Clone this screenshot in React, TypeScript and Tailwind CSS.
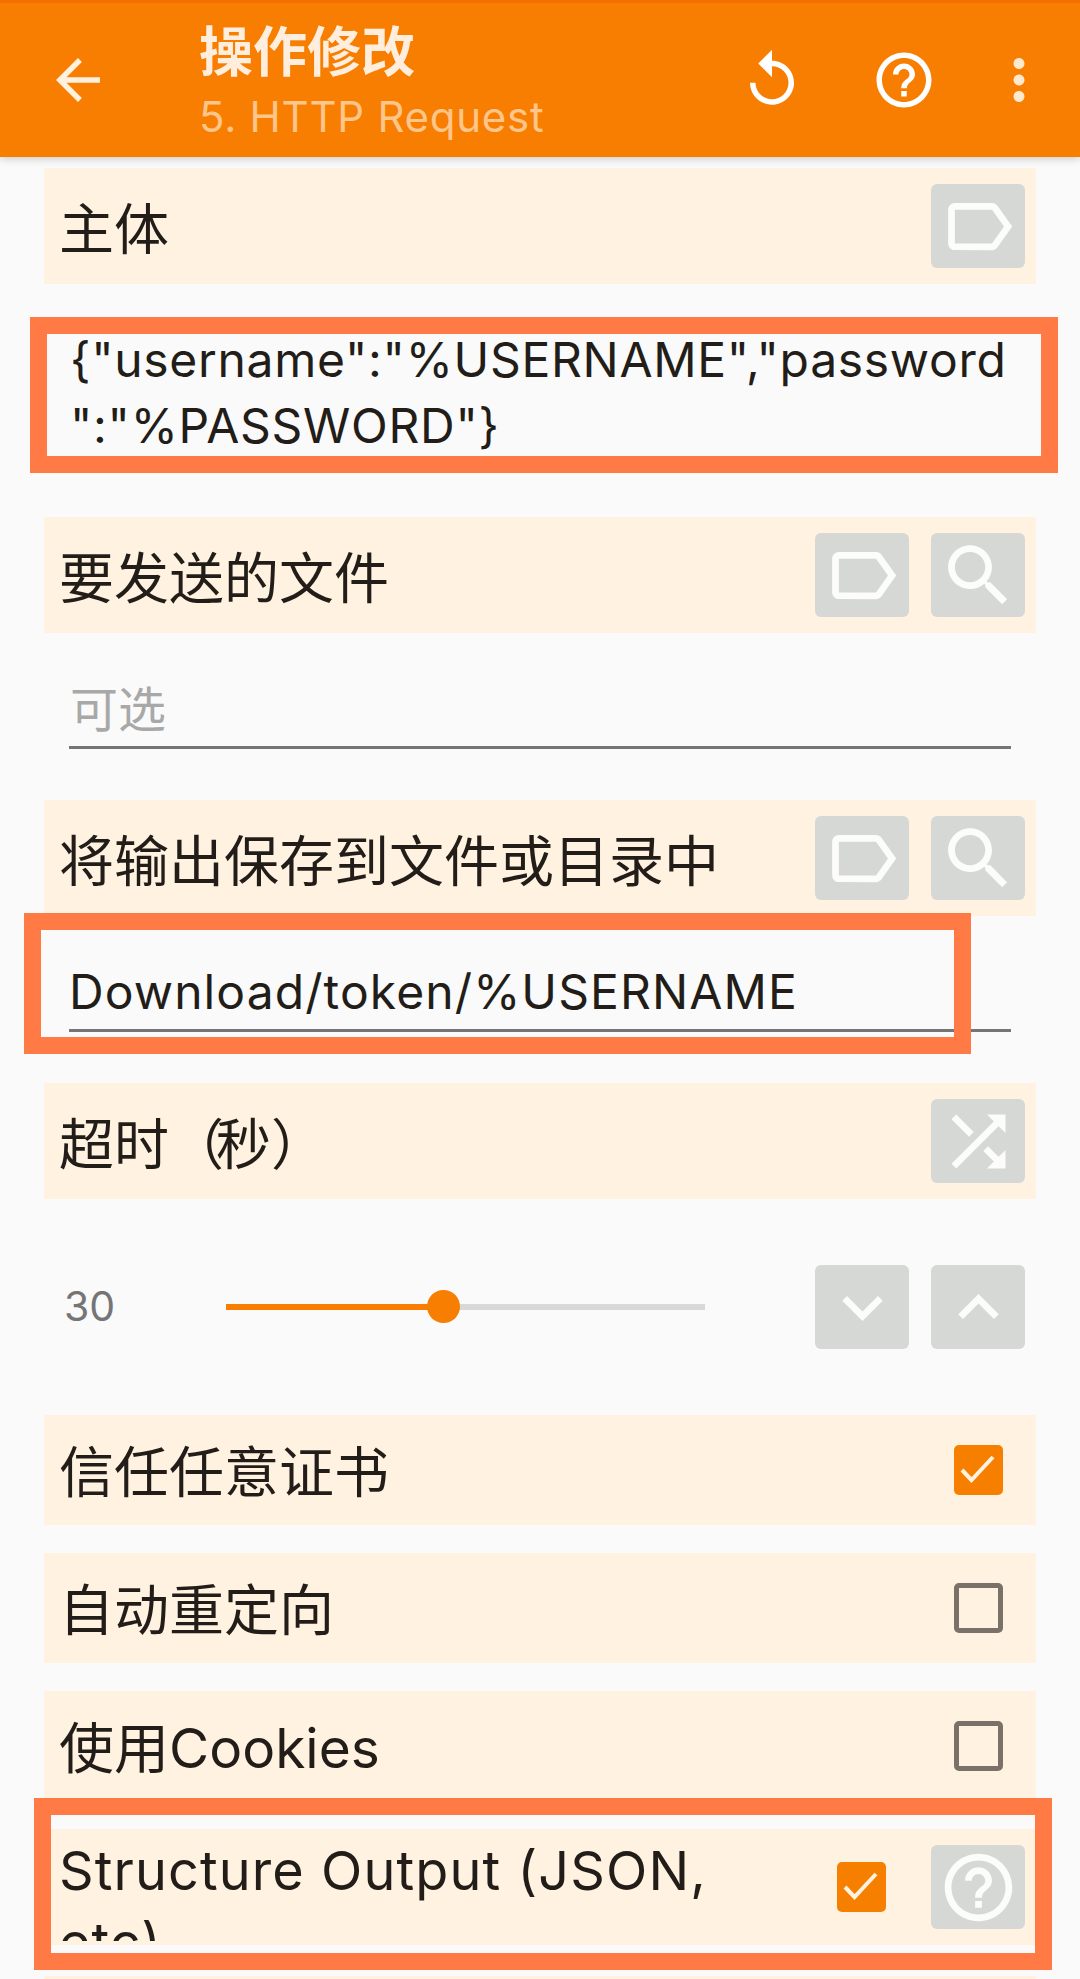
const ICONS = {
  label:
    "M17.63 5.84C17.27 5.33 16.67 5 16 5L5 5.01C3.9 5.01 3 5.9 3 7v10c0 1.1.9 1.99 2 1.99L16 19c.67 0 1.27-.33 1.63-.84L22 12l-4.37-6.16zM16 17H5V7h11l3.55 5L16 17z",
  search:
    "M15.5 14h-.79l-.28-.27C15.41 12.59 16 11.11 16 9.5 16 5.91 13.09 3 9.5 3S3 5.91 3 9.5 5.91 16 9.5 16c1.61 0 3.09-.59 4.23-1.57l.27.28v.79l5 4.99L20.49 19l-4.99-5zm-6 0C7.01 14 5 11.99 5 9.5S7.01 5 9.5 5 14 7.01 14 9.5 11.99 14 9.5 14z",
  shuffle:
    "M10.59 9.17L5.41 4 4 5.41l5.17 5.17 1.42-1.41zM14.5 4l2.04 2.04L4 18.59 5.41 20 17.96 7.46 20 9.5V4h-5.5zm.33 9.41l-1.41 1.41 3.13 3.13L14.5 20H20v-5.5l-2.04 2.04-3.13-3.13z",
  down: "M16.59 8.59L12 13.17 7.41 8.59 6 10l6 6 6-6z",
  up: "M12 8l-6 6 1.41 1.41L12 10.83l4.59 4.58L18 14z",
  help:
    "M11 18h2v-2h-2v2zm1-16C6.48 2 2 6.48 2 12s4.48 10 10 10 10-4.48 10-10S17.52 2 12 2zm0 18c-4.41 0-8-3.59-8-8s3.59-8 8-8 8 3.59 8 8-3.59 8-8 8zm0-14c-2.21 0-4 1.79-4 4h2c0-1.1.9-2 2-2s2 .9 2 2c0 2-3 1.75-3 5h2c0-2.25 3-2.5 3-5 0-2.21-1.79-4-4-4z",
  replay:
    "M12 5V1L7 6l5 5V7c3.31 0 6 2.69 6 6s-2.69 6-6 6-6-2.69-6-6H4c0 4.42 3.58 8 8 8s8-3.58 8-8-3.58-8-8-8z",
  more:
    "M12 8c1.1 0 2-.9 2-2s-.9-2-2-2-2 .9-2 2 .9 2 2 2zm0 2c-1.1 0-2 .9-2 2s.9 2 2 2 2-.9 2-2-.9-2-2-2zm0 6c-1.1 0-2 .9-2 2s.9 2 2 2 2-.9 2-2-.9-2-2-2z",
  back: "M20 11H7.83l5.59-5.59L12 4l-8 8 8 8 1.41-1.41L7.83 13H20v-2z",
};

type IconName = keyof typeof ICONS;

function Icon({ name, className }: { name: IconName; className: string }) {
  return (
    <svg viewBox="0 0 24 24" fill="currentColor" className={className}>
      <path d={ICONS[name]} />
    </svg>
  );
}

function IconButton({ name }: { name: IconName }) {
  return (
    <div className="flex h-[84px] w-[94px] items-center justify-center rounded-[6px] bg-[#d6d8d6] text-[#fcfcfa]">
      <Icon name={name} className="h-[81px] w-[81px]" />
    </div>
  );
}

function Checkbox({ checked }: { checked: boolean }) {
  if (!checked) {
    return <div className="h-[50px] w-[49px] rounded-[5px] border-[5px] border-[#7a7268]" />;
  }
  return (
    <div className="flex h-[50px] w-[49px] items-center justify-center rounded-[5px] bg-[#f77f00]">
      <svg viewBox="0 0 49 50" className="h-[50px] w-[49px]" fill="none" stroke="#fff2e0" strokeWidth="4">
        <path d="M8 25l9.500 10L39 12" />
      </svg>
    </div>
  );
}

function Row({ label, icons = [], className = "" }: { label: React.ReactNode; icons?: IconName[]; className?: string }) {
  return (
    <div className={`flex h-[116px] items-center gap-[22px] bg-[#fff2e0] pr-[11px] pl-[15px] ${className}`}>
      <span className="mt-[5px] flex-1 text-[55px] leading-[72px] text-[#221d18]">{label}</span>
      {icons.map((name, i) => (
        <IconButton key={i} name={name} />
      ))}
    </div>
  );
}

function CheckRow({ label, checked, className = "" }: { label: string; checked: boolean; className?: string }) {
  return (
    <div className={`flex h-[110px] items-center bg-[#fff2e0] pr-[33px] pl-[15px] ${className}`}>
      <span className="mt-[3px] flex-1 text-[55px] leading-[72px] text-[#221d18]">{label}</span>
      <Checkbox checked={checked} />
    </div>
  );
}

function Marker({ className }: { className: string }) {
  return <div className={`absolute border-[17px] border-[#ff7a45] ${className}`} />;
}

export default function App() {
  return (
    <div
      className="relative h-[1979px] w-[1080px] overflow-hidden bg-[#fafafa]"
      style={{ fontFamily: '"Inter", "Noto Sans CJK SC", sans-serif' }}
    >
      <header className="relative z-10 flex h-[157px] items-center border-t-[3px] border-[#f26f00] bg-[#f77e00] shadow-[0_2px_8px_rgba(0,0,0,0.18)]">
        <Icon name="back" className="ml-[45px] h-[66px] w-[66px] text-[#fff0e0]" />
        <div className="ml-[88px] flex-1 pt-[3px]">
          <h1 className="text-[54px] leading-[66px] font-bold text-[#ffeedd]">操作修改</h1>
          <p className="mt-[4px] text-[42px] leading-[54px] tracking-[0.75px] text-[#ffc58a]">5. HTTP Request</p>
        </div>
        <Icon name="replay" className="h-[66px] w-[66px] text-white" />
        <Icon name="help" className="ml-[66px] h-[66px] w-[66px] text-white" />
        <Icon name="more" className="mr-[28px] ml-[49px] h-[66px] w-[66px] text-[#ffe8d0]" />
      </header>

      <main className="mx-[44px] flex flex-col">
        <Row label="主体" icons={["label"]} className="mt-[11px]" />
        <div className="h-[233px] pt-[43px] pl-[26px] text-[48px] leading-[66px] tracking-[0.7px] text-[#221d18]">
          {'{"username":"%USERNAME","password'}
          <br />
          {'":"%PASSWORD"}'}
        </div>
        <Row label="要发送的文件" icons={["label", "search"]} />
        <div className="mx-[25px] h-[116px] border-b-[3px] border-[#757575] pt-[44px] pl-[1px] text-[48px] leading-[66px] text-[#a8a8a8]">
          可选
        </div>
        <div className="h-[51px]" />
        <Row label="将输出保存到文件或目录中" icons={["label", "search"]} />
        <div className="mx-[25px] h-[116px] border-b-[3px] border-[#757575] pt-[43px] text-[48px] leading-[66px] tracking-[1.1px] text-[#221d18]">
          Download/token/%USERNAME
        </div>
        <div className="h-[51px]" />
        <Row
          label={
            <>
              超时<span className="tracking-[-8px]">（</span>秒<span className="tracking-[-8px]">）</span>
            </>
          }
          icons={["shuffle"]}
        />

        <div className="mt-[66px] mb-[66px] flex h-[84px] items-center pr-[11px] pl-[20px]">
          <span className="w-[162px] text-[41px] text-[#757575]">30</span>
          <div className="relative h-[6px] w-[479px] bg-[#d8d8d8]">
            <div className="h-[6px] w-[217px] bg-[#f77e00]" />
            <div className="absolute top-[-14px] left-[201px] h-[33px] w-[33px] rounded-full bg-[#f77e00]" />
          </div>
          <div className="ml-[110px] flex gap-[22px]">
            <IconButton name="down" />
            <IconButton name="up" />
          </div>
        </div>

        <CheckRow label="信任任意证书" checked />
        <CheckRow label="自动重定向" checked={false} className="mt-[28px]" />
        <CheckRow label="使用Cookies" checked={false} className="mt-[28px]" />

        <div className="mt-[28px] flex h-[116px] items-start bg-[#fff2e0] pr-[11px] pl-[15px]">
          <div className="mt-[6px] h-[106px] w-[720px] overflow-hidden text-[54px] leading-[72px] tracking-[1.1px] text-[#221d18]">
            Structure Output (JSON, etc)
          </div>
          <div className="mt-[33px] ml-[58px]">
            <Checkbox checked />
          </div>
          <div className="mt-[16px] ml-[45px]">
            <IconButton name="help" />
          </div>
        </div>

        <div className="mt-[31px] h-[40px] bg-[#fff2e0]" />
      </main>

      <Marker className="top-[317px] left-[30px] h-[156px] w-[1028px]" />
      <Marker className="top-[913px] left-[24px] h-[141px] w-[947px]" />
      <Marker className="top-[1798px] left-[34px] h-[172px] w-[1018px]" />
    </div>
  );
}
